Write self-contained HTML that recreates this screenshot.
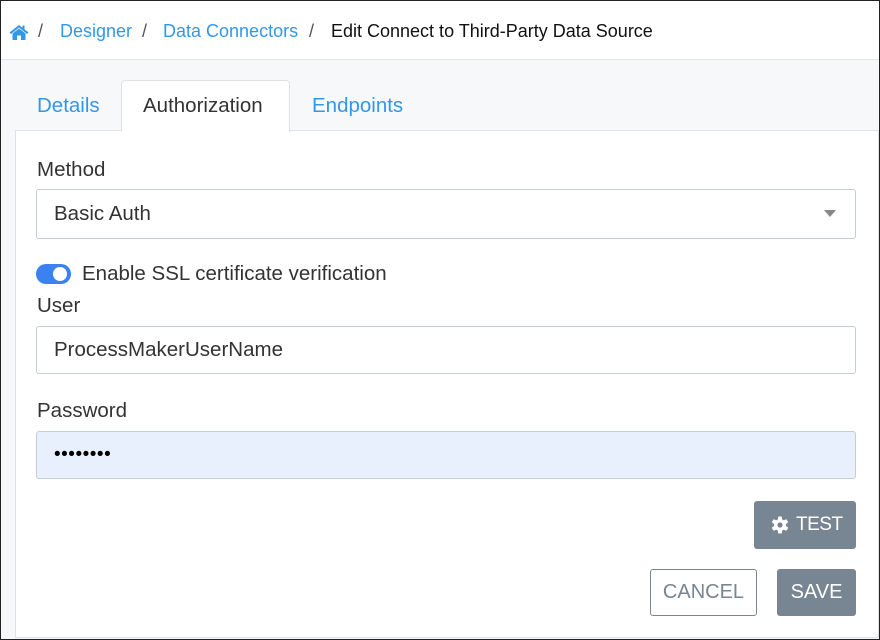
<!DOCTYPE html>
<html><head><meta charset="utf-8"><style>
*{box-sizing:border-box;margin:0;padding:0}
html,body{width:880px;height:640px;overflow:hidden}
body{font-family:"Liberation Sans",sans-serif;background:#f7f8fa;position:relative}
.frame{position:absolute;left:0;top:0;width:880px;height:640px;border:1px solid #222;pointer-events:none;z-index:10}
.hdr{position:absolute;left:0;top:0;width:880px;height:60px;background:#fff;border-bottom:1px solid #e2e5e9;font-size:18px;color:#3397e8}
.hdr span{position:absolute;top:21px;white-space:nowrap}
.sep{color:#555}
.tab{position:absolute;top:94px;font-size:20.5px;color:#3397e8;white-space:nowrap}
.tabact{position:absolute;left:121px;top:80px;width:169px;height:52px;background:#fff;border:1px solid #dee2e6;border-bottom:none;border-radius:4px 4px 0 0;z-index:2}
.card{position:absolute;left:15px;top:130px;width:864px;height:508px;background:#fff;border:1px solid #dee2e6}
.lbl{position:absolute;font-size:20.5px;color:#333;white-space:nowrap}
.inp{position:absolute;left:36px;width:820px;border:1px solid #c5ccd4;border-radius:3px;background:#fff;font-size:20.5px;color:#333;padding-left:17px}
.btn{position:absolute;background:#788592;color:#fff;border-radius:3px;font-size:20px;text-align:center}
</style></head><body>
<div class="hdr">
<svg style="position:absolute;left:9px;top:24px" width="20" height="16" viewBox="0 0 20 16"><path d="M10 1 L0.5 8.5 L2 10 L10 3.5 L18 10 L19.5 8.5 L15.5 5.3 V1.5 H13.5 V3.7 Z" fill="#3397e8"/><path d="M3.5 9.5 L10 4.5 L16.5 9.5 V16 H12 V11.5 H8 V16 H3.5 Z" fill="#3397e8"/></svg>
<span class="sep" style="left:38px">/</span>
<span style="left:60px">Designer</span>
<span class="sep" style="left:142px">/</span>
<span style="left:163px">Data Connectors</span>
<span class="sep" style="left:309px">/</span>
<span style="left:331px;color:#111">Edit Connect to Third-Party Data Source</span>
</div>
<div class="card"></div>
<div class="tabact"></div>
<div class="tab" style="left:37px">Details</div>
<div class="tab" style="left:143px;color:#333;z-index:3">Authorization</div>
<div class="tab" style="left:312px">Endpoints</div>

<div class="lbl" style="left:37px;top:158px">Method</div>
<div class="inp" style="top:189px;height:50px;line-height:48px">Basic Auth
<svg style="position:absolute;right:19px;top:20px" width="12" height="7"><path d="M0 0H12L6 7Z" fill="#888"/></svg></div>

<div style="position:absolute;left:36px;top:264px;width:35px;height:20px;border-radius:10px;background:#3a82f0"></div>
<div style="position:absolute;left:53px;top:267px;width:14px;height:14px;border-radius:50%;background:#fff"></div>
<div class="lbl" style="left:82px;top:262px">Enable SSL certificate verification</div>

<div class="lbl" style="left:37px;top:294px">User</div>
<div class="inp" style="top:326px;height:48px;line-height:46px">ProcessMakerUserName</div>

<div class="lbl" style="left:37px;top:399px">Password</div>
<div class="inp" style="top:431px;height:48px;line-height:46px;background:#e8f0fe;color:#000;font-size:19px;letter-spacing:0.5px">••••••••</div>

<div class="btn" style="left:754px;top:501px;width:102px;height:48px;line-height:48px">
<span style="position:absolute;left:42px;top:0;font-size:19px;letter-spacing:-0.5px">TEST</span>
<svg style="position:absolute;left:17px;top:15px" width="18" height="18" viewBox="0 0 18 18"><g fill="#fff"><circle cx="9" cy="9" r="6"/><rect x="7" y="0.5" width="4" height="17" rx="1"/><rect x="7" y="0.5" width="4" height="17" rx="1" transform="rotate(60 9 9)"/><rect x="7" y="0.5" width="4" height="17" rx="1" transform="rotate(120 9 9)"/></g><circle cx="9" cy="9" r="2.6" fill="#788592"/></svg></div>

<div style="position:absolute;left:650px;top:569px;width:107px;height:47px;border:1px solid #788592;border-radius:3px;color:#788592;font-size:20px;text-align:center;line-height:45px">CANCEL</div>
<div class="btn" style="left:777px;top:569px;width:79px;height:47px;line-height:47px">SAVE</div>
<div class="frame"></div>
</body></html>
